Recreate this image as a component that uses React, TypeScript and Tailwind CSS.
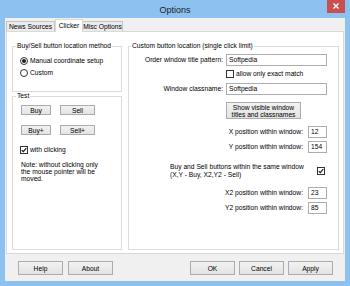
import React from 'react';

const font = "font-['Liberation_Sans',Arial,sans-serif]";

function Btn({ children, className = '' }: { children: React.ReactNode; className?: string }) {
  return (
    <button
      className={`flex items-center justify-center border border-[#acacac] bg-gradient-to-b from-[#f2f2f2] to-[#e3e3e3] text-black leading-[7px] ${className}`}
    >
      {children}
    </button>
  );
}

function Check({ checked }: { checked?: boolean }) {
  return (
    <span className="flex h-[8px] w-[8px] shrink-0 items-center justify-center border border-[#333] bg-white">
      {checked && (
        <svg viewBox="0 0 8 8" className="h-[6px] w-[6px]">
          <path d="M1 4.3 L3.1 6.3 L7 1.4" fill="none" stroke="#1a1a1a" strokeWidth="1.5" />
        </svg>
      )}
    </span>
  );
}

function Radio({ checked }: { checked?: boolean }) {
  return (
    <span className="flex h-[8px] w-[8px] shrink-0 items-center justify-center rounded-full border border-[#333] bg-white">
      {checked && <span className="h-[4px] w-[4px] rounded-full bg-[#1a1a1a]" />}
    </span>
  );
}

function Field({ value, className = '' }: { value: string; className?: string }) {
  return (
    <div className={`flex h-[12px] shrink-0 items-center border border-[#abadb3] bg-white pl-[2px] ${className}`}>
      {value}
    </div>
  );
}

function LabeledRow({ label, value, wide, className = '' }: { label: string; value: string; wide?: boolean; className?: string }) {
  return (
    <div className={`flex items-center justify-end pr-[11px] ${wide ? 'gap-[3px]' : 'gap-[5px]'} ${className}`}>
      <span>{label}</span>
      <Field value={value} className={wide ? 'w-[101px]' : 'w-[19px]'} />
    </div>
  );
}

export default function App() {
  return (
    <div className={`flex h-[286px] w-[350px] flex-col bg-[#8cc1f0] text-[6.7px] leading-[8px] text-black ${font}`}>
      {/* title bar */}
      <div className="grid h-[18px] shrink-0 grid-cols-[1fr_auto_1fr] items-start">
        <div />
        <div className="pt-[5px] text-[9px] leading-[10px] text-[#1e1e1e]">Options</div>
        <div className="flex justify-end pr-[5px]">
          <div className="flex h-[13px] w-[18px] items-center justify-center bg-[#c75050]">
            <svg viewBox="0 0 18 13" className="h-[13px] w-[18px]">
              <path d="M6.5 3.5 L11.5 8.5 M11.5 3.5 L6.5 8.5" stroke="#fff" strokeWidth="1.4" />
            </svg>
          </div>
        </div>
      </div>

      {/* client area */}
      <div className="mx-[5px] mb-[5px] flex flex-1 flex-col bg-[#f0f0f0] px-[1px] pt-[1px]">
        {/* tabs */}
        <div className="flex h-[12px] items-end">
          <div className="flex h-[10px] w-[49px] items-center justify-center border border-b-0 border-[#c4c4c4] bg-[#ececec]">
            News Sources
          </div>
          <div className="relative z-10 -mb-[1px] flex h-[13px] w-[28px] items-center justify-center border border-b-0 border-[#d9d9d9] bg-white">
            Clicker
          </div>
          <div className="flex h-[10px] w-[40px] items-center justify-center border border-b-0 border-l-0 border-[#c4c4c4] bg-[#ececec]">
            Misc Options
          </div>
        </div>

        {/* tab page */}
        <div className="flex h-[223px] shrink-0 gap-[6px] border border-[#d9d9d9] bg-white pl-[5px] pr-[4px] pt-[10px]">
          <div className="flex w-[110px] flex-col">
            <fieldset className="h-[50px] border border-[#dcdcdc]">
              <legend className="ml-[3px] px-[1px]">Buy/Sell button location method</legend>
              <div className="flex flex-col gap-[4px] pl-[7px] pt-[7px]">
                <div className="flex h-[8px] items-center gap-[2px]">
                  <Radio checked />
                  <span>Manual coordinate setup</span>
                </div>
                <div className="flex h-[8px] items-center gap-[2px]">
                  <Radio />
                  <span>Custom</span>
                </div>
              </div>
            </fieldset>

            <fieldset className="h-[158px] border border-[#dcdcdc]">
              <legend className="ml-[3px] px-[1px]">Test</legend>
              <div className="flex flex-col pl-[8px] pt-[5px]">
                <div className="flex gap-[9px]">
                  <Btn className="h-[10px] w-[30px]">Buy</Btn>
                  <Btn className="h-[10px] w-[35px]">Sell</Btn>
                </div>
                <div className="mt-[10px] flex gap-[9px]">
                  <Btn className="h-[10px] w-[30px]">Buy+</Btn>
                  <Btn className="h-[10px] w-[35px]">Sell+</Btn>
                </div>
                <div className="-ml-[1px] mt-[11px] flex h-[8px] items-center gap-[2px]">
                  <Check checked />
                  <span>with clicking</span>
                </div>
                <p className="mt-[7px] leading-[7px]">
                  Note: without clicking only
                  <br />
                  the mouse pointer will be
                  <br />
                  moved.
                </p>
              </div>
            </fieldset>
          </div>

          <fieldset className="h-[208px] w-[211px] border border-[#dcdcdc]">
            <legend className="ml-[2px] px-[1px]">Custom button location (single click limit)</legend>
            <div className="flex flex-col pt-[4px]">
              <LabeledRow label="Order window title pattern:" value="Softpedia" wide />
              <div className="mt-[4px] flex h-[8px] items-center gap-[2px] pl-[97px]">
                <Check />
                <span>allow only exact match</span>
              </div>
              <LabeledRow label="Window classname:" value="Softpedia" wide className="mt-[5px]" />
              <div className="mt-[7px] pl-[97px]">
                <Btn className="h-[17px] w-[75px] flex-col">
                  <span>Show visible window</span>
                  <span>titles and classnames</span>
                </Btn>
              </div>
              <LabeledRow label="X position within window:" value="12" className="mt-[7px]" />
              <LabeledRow label="Y position within window:" value="154" className="mt-[3px]" />
              <div className="mt-[10px] flex items-center justify-between pl-[41px] pr-[13px]">
                <span>
                  Buy and Sell buttons within the same window
                  <br />
                  (X,Y - Buy, X2,Y2 - Sell)
                </span>
                <Check checked />
              </div>
              <LabeledRow label="X2 position within window:" value="23" className="mt-[8px]" />
              <LabeledRow label="Y2 position within window:" value="85" className="mt-[3px]" />
            </div>
          </fieldset>
        </div>

        {/* dialog buttons */}
        <div className="flex flex-1 items-start justify-between pl-[12px] pr-[11px] pt-[7px]">
          <div className="flex gap-[5px]">
            <Btn className="h-[14px] w-[45px]">Help</Btn>
            <Btn className="h-[14px] w-[45px]">About</Btn>
          </div>
          <div className="flex gap-[4px]">
            <Btn className="h-[14px] w-[45px]">OK</Btn>
            <Btn className="h-[14px] w-[45px]">Cancel</Btn>
            <Btn className="h-[14px] w-[45px]">Apply</Btn>
          </div>
        </div>
      </div>
    </div>
  );
}
